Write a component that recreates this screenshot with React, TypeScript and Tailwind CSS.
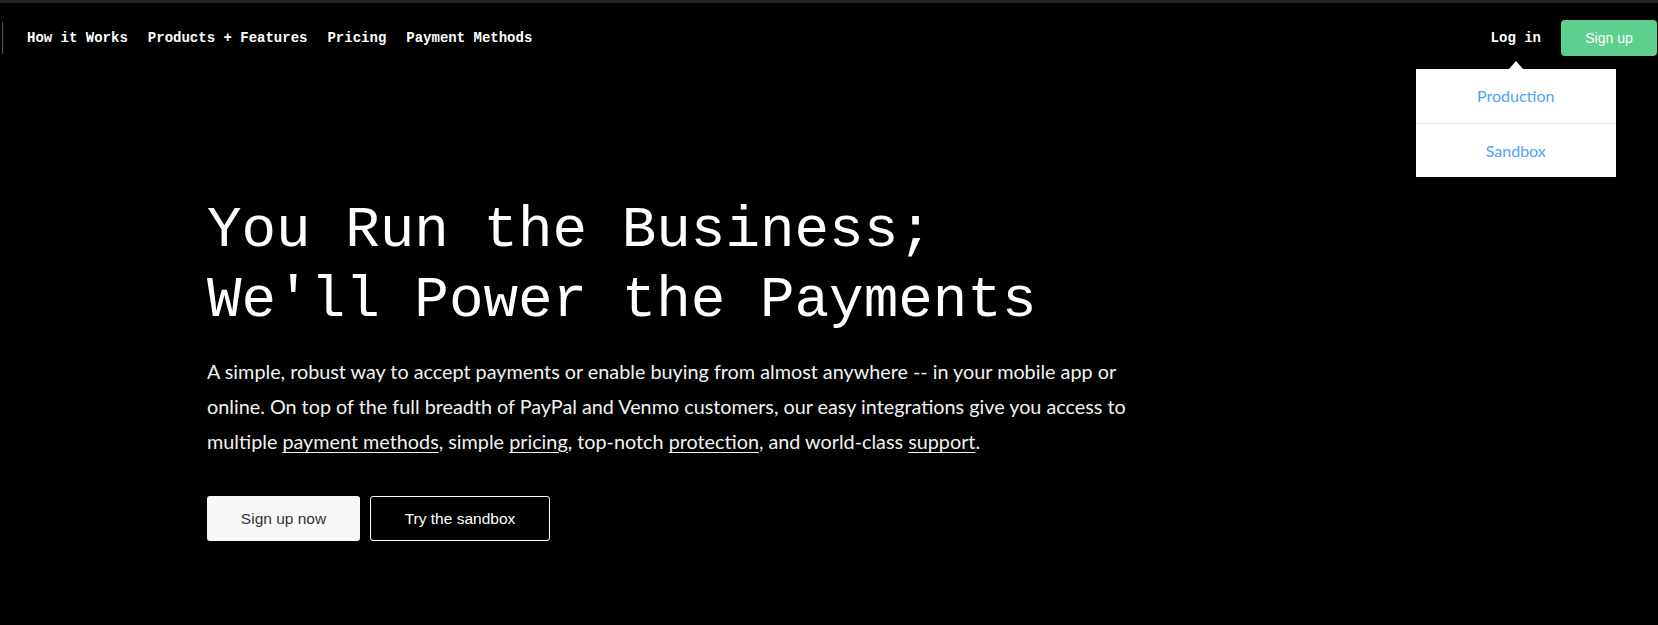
import type { FC } from "react";

const navLinks = ["How it Works", "Products + Features", "Pricing", "Payment Methods"];

// courier-like stack, falls back to Liberation Mono (same metrics)
const mono = "font-['Courier_New','Nimbus_Mono_PS','FreeMono','Liberation_Mono',monospace]";

const LoginMenu: FC = () => (
  <div className="relative flex h-9 items-center">
    <span className={`${mono} text-[14px] font-bold text-white`}>Log in</span>
    {/* dropdown is open in the screenshot */}
    <div className="absolute left-1/2 top-[49px] w-[200px] -translate-x-1/2 bg-white">
      <div className="absolute -top-2 left-1/2 h-0 w-0 -translate-x-1/2 border-x-[7px] border-b-[8px] border-x-transparent border-b-white" />
      <div className="flex h-[54px] items-center justify-center font-['Lato',sans-serif] text-[16px] text-[#4da3f7]">
        Production
      </div>
      <div className="flex h-[54px] items-center justify-center border-t border-[#e5e5e5] font-['Lato',sans-serif] text-[16px] text-[#4da3f7]">
        Sandbox
      </div>
    </div>
  </div>
);

const Header: FC = () => (
  <header className="flex items-center justify-between py-[17px] pr-px">
    <nav className="flex items-center">
      <div className="ml-[2px] h-8 w-px bg-[#555]" />
      <div className={`ml-6 flex gap-5 ${mono} text-[14px] font-bold text-white`}>
        {navLinks.map(link => (
          <a key={link} href="#">{link}</a>
        ))}
      </div>
    </nav>
    <div className="flex items-center gap-5">
      <LoginMenu />
      <button className="h-9 w-24 rounded-[4px] bg-[#5dd08f] font-['Liberation_Sans',sans-serif] text-[14px] text-white">
        Sign up
      </button>
    </div>
  </header>
);

const Hero: FC = () => (
  <section className="mt-[123px] pl-[207px]">
    <h1 className={`${mono} text-[57.6px] font-normal leading-[70px] text-white`}>
      You Run the Business;
      <br />
      We'll Power the Payments
    </h1>
    <p className="mt-[18px] font-['Lato',sans-serif] text-[19.8px] leading-[35px] text-[#f2f2f2]">
      A simple, robust way to accept payments or enable buying from almost anywhere -- in your mobile app or
      <br />
      online. On top of the full breadth of PayPal and Venmo customers, our easy integrations give you access to
      <br />
      multiple <a href="#" className="underline underline-offset-[3px]">payment methods</a>, simple{" "}
      <a href="#" className="underline underline-offset-[3px]">pricing</a>, top-notch{" "}
      <a href="#" className="underline underline-offset-[3px]">protection</a>, and world-class{" "}
      <a href="#" className="underline underline-offset-[3px]">support</a>.
    </p>
    <div className="mt-[37px] flex gap-[10px] font-['Liberation_Sans',sans-serif] text-[15.5px]">
      <button className="h-[45px] w-[153px] rounded-[3px] bg-[#f8f8f8] text-[#333]">Sign up now</button>
      <button className="h-[45px] w-[180px] rounded-[3px] border border-white text-white">Try the sandbox</button>
    </div>
  </section>
);

export default function App() {
  return (
    <div className="min-h-[625px] w-full bg-black">
      <div className="h-[3px] bg-[#222]" />
      <Header />
      <Hero />
    </div>
  );
}
